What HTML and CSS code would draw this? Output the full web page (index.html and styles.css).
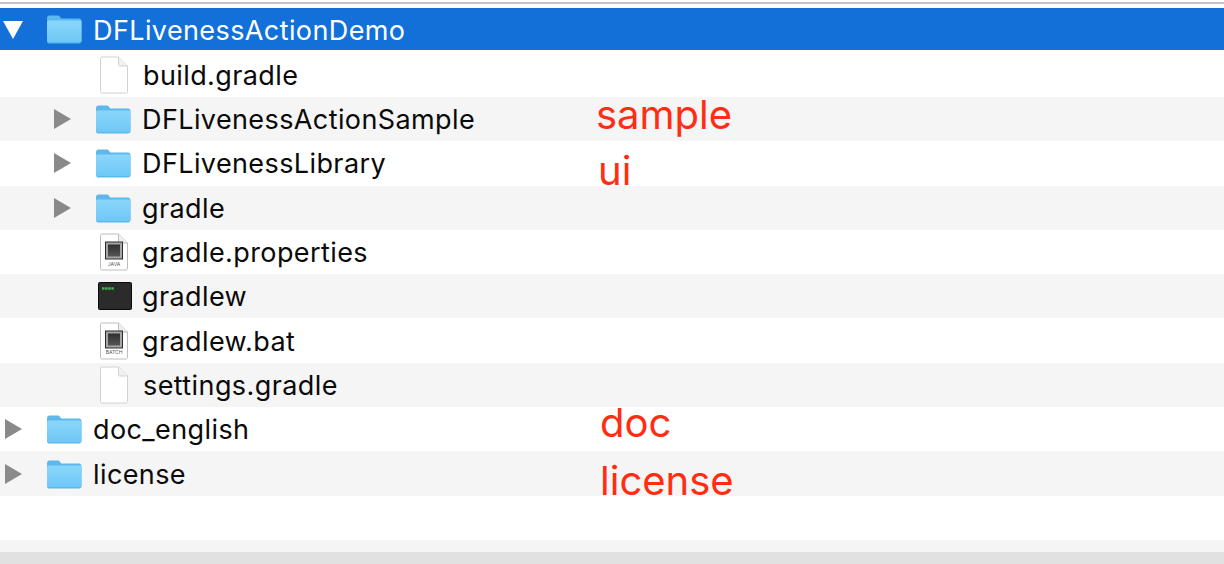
FILE: index.html
```html
<!DOCTYPE html>
<html lang="en">
<head>
<meta charset="utf-8">
<title>DFLivenessActionDemo</title>
<link rel="stylesheet" href="styles.css">
</head>
<body>
<svg class="defs" width="0" height="0" aria-hidden="true">
  <defs>
    <linearGradient id="fg" x1="0" y1="0" x2="0" y2="1"><stop offset="0" stop-color="#8ad6fb"/><stop offset="1" stop-color="#6fc8f7"/></linearGradient>
    <linearGradient id="core" x1="0" y1="0" x2="0" y2="1"><stop offset="0" stop-color="#2f2f2f"/><stop offset="1" stop-color="#565656"/></linearGradient>
    <symbol id="folder" viewBox="0 0 36 30">
      <path d="M1 4.500C1 2.500 2 1.500 3.500 1.500H11.500C13 1.500 13.500 2 14.500 3.500L15.300 4.500H33C34.500 4.500 35.500 5.500 35.500 7V27C35.500 28.500 34.500 29.500 33 29.500H3C1.800 29.500 1 28.500 1 27Z" fill="#5db8ec"/>
      <path d="M1 8C1 7 1.800 6.500 3 6.500H33.500C34.800 6.500 35.500 7 35.500 8V26.500C35.500 27.500 34.500 28 33.500 28H3C1.800 28 1 27.500 1 26.500Z" fill="url(#fg)"/>
    </symbol>
    <symbol id="doc" viewBox="0 0 30 38">
      <path d="M1.500 2.500C1.500 1.500 2 1 3 1H19.500L28.500 10V35.500C28.500 36.500 28 37 27 37H3C2 37 1.500 36.500 1.500 35.500Z" fill="#fff" stroke="#d2d2d2"/>
      <path d="M19.500 1V8.500C19.500 9.500 20 10 21 10H28.500" fill="#f1f1f1" stroke="#d2d2d2"/>
    </symbol>
    <symbol id="source" viewBox="0 0 30 38">
      <path d="M1.500 2.500C1.500 1.500 2 1 3 1H19.500L28.500 10V35.500C28.500 36.500 28 37 27 37H3C2 37 1.500 36.500 1.500 35.500Z" fill="#fff" stroke="#bdbdbd"/>
      <path d="M19.500 1V8.500C19.500 9.500 20 10 21 10H28.500" fill="#eee" stroke="#bdbdbd"/>
      <rect x="6" y="8.500" width="18" height="18" fill="#2c2c2c"/>
      <rect x="7" y="9.500" width="16" height="16" fill="#a6a6a6"/>
      <rect x="9" y="11.500" width="12" height="12" fill="url(#core)"/>
    </symbol>
    <symbol id="terminal" viewBox="0 0 34 28">
      <rect x="0.500" y="0.500" width="33" height="27" rx="1" fill="#2b2b2b" stroke="#0c0c0c"/>
      <path d="M4 6.500H16" stroke="#3fb24f" stroke-width="2.500" stroke-dasharray="2.500 0.600"/>
    </symbol>
  </defs>
</svg>
<main class="finder">
  <div class="topline"></div>
  <ul class="list">
    <li class="row selected">
      <span class="arrow open"></span>
      <svg class="ico folder"><use href="#folder"/></svg>
      <span class="name">DFLivenessActionDemo</span>
    </li>
    <li class="row child first">
      <svg class="ico doc"><use href="#doc"/></svg>
      <span class="name">build.gradle</span>
    </li>
    <li class="row child alt">
      <span class="arrow"></span>
      <svg class="ico folder"><use href="#folder"/></svg>
      <span class="name">DFLivenessActionSample</span>
    </li>
    <li class="row child">
      <span class="arrow"></span>
      <svg class="ico folder"><use href="#folder"/></svg>
      <span class="name">DFLivenessLibrary</span>
    </li>
    <li class="row child alt">
      <span class="arrow"></span>
      <svg class="ico folder"><use href="#folder"/></svg>
      <span class="name">gradle</span>
    </li>
    <li class="row child">
      <svg class="ico doc source"><use href="#source"/></svg>
      <span class="badge">JAVA</span>
      <span class="name">gradle.properties</span>
    </li>
    <li class="row child alt">
      <svg class="ico term"><use href="#terminal"/></svg>
      <span class="name">gradlew</span>
    </li>
    <li class="row child">
      <svg class="ico doc source"><use href="#source"/></svg>
      <span class="badge">BATCH</span>
      <span class="name">gradlew.bat</span>
    </li>
    <li class="row child alt">
      <svg class="ico doc"><use href="#doc"/></svg>
      <span class="name">settings.gradle</span>
    </li>
    <li class="row">
      <span class="arrow"></span>
      <svg class="ico folder"><use href="#folder"/></svg>
      <span class="name">doc_english</span>
    </li>
    <li class="row alt">
      <span class="arrow"></span>
      <svg class="ico folder"><use href="#folder"/></svg>
      <span class="name">license</span>
    </li>
    <li class="row"></li>
  </ul>
  <div class="strip"></div>
  <div class="scrollbar"></div>
  <span class="note note-sample">sample</span>
  <span class="note note-ui">ui</span>
  <span class="note note-doc">doc</span>
  <span class="note note-license">license</span>
</main>
</body>
</html>
```

FILE: styles.css
```css
* { box-sizing: border-box; }
html, body { margin: 0; padding: 0; height: 100%; background: #fff; overflow: hidden; }
.defs { position: absolute; }
.finder {
  position: relative;
  width: 1224px;
  height: 564px;
  font-family: Inter, "Liberation Sans", sans-serif;
  color: #0a0a0a;
  display: flex;
  flex-direction: column;
}
.topline { height: 8px; border-top: 2px solid #fff; position: relative; }
.topline::before { content: ""; display: block; height: 2px; background: #c4c4c4; }
.list { list-style: none; margin: 0; padding: 0; }
.row {
  position: relative;
  height: 44.300px;
  display: flex;
  align-items: center;
  font-size: 27px;
  letter-spacing: 0.400px;
}
.row.alt { background: #f5f5f5; }
.row.selected { height: 42px; margin-bottom: 2.700px; background: #1270d8; color: #fff; }
.row .arrow {
  position: absolute;
  left: 5px;
  width: 0;
  height: 0;
  border-style: solid;
  border-width: 10px 0 10px 17px;
  border-color: transparent transparent transparent #8a8a8a;
}
.row.child .arrow { left: 54px; }
.row .arrow.open {
  left: 3px;
  margin-top: 2px;
  border-width: 18px 10.500px 0 10.500px;
  border-color: #fff transparent transparent transparent;
}
.ico { flex: none; display: block; }
.folder { width: 36px; height: 30px; margin-left: 46px; }
.child .folder { margin-left: 95px; }
.doc { width: 30px; height: 38px; margin-left: 99px; margin-right: 3px; }
.doc.source { margin-right: 2px; }
.term { width: 34px; height: 28px; margin-left: 98px; margin-right: -1px; }
.name { margin-left: 11px; padding-top: 1px; white-space: nowrap; }
.selected .name { padding-top: 3px; }
.badge {
  position: absolute;
  left: 99px;
  width: 30px;
  top: 31px;
  text-align: center;
  font-size: 5px;
  letter-spacing: 0;
  color: #555;
}
.strip { height: 12px; background: #f5f5f5; }
.scrollbar { flex: 1; background: #e1e1e1; }
.note { position: absolute; color: #ff2d12; font-size: 40px; line-height: 48px; white-space: nowrap; }
.note-sample { left: 596px; top: 91px; }
.note-ui { left: 598px; top: 147px; }
.note-doc { left: 600px; top: 399px; }
.note-license { left: 600px; top: 457px; }
```
